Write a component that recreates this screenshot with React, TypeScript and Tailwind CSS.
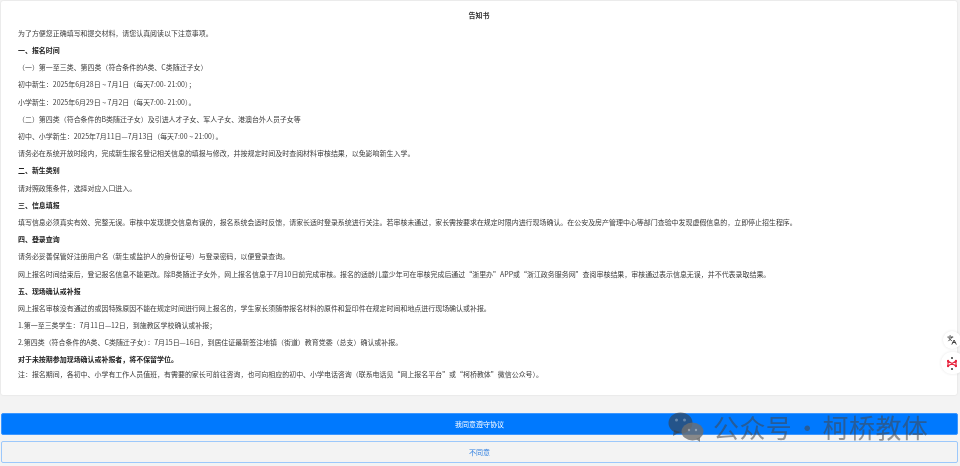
import { Languages } from 'lucide-react';

const rows: { text: string; bold?: boolean }[] = [
  { text: '为了方便您正确填写和提交材料，请您认真阅读以下注意事项。' },
  { text: '一、报名时间', bold: true },
  { text: '（一）第一至三类、第四类（符合条件的A类、C类随迁子女）' },
  { text: '初中新生：2025年6月28日 ~ 7月1日（每天7:00- 21:00）；' },
  { text: '小学新生：2025年6月29日 ~ 7月2日（每天7:00- 21:00）。' },
  { text: '（二）第四类（符合条件的B类随迁子女）及引进人才子女、军人子女、港澳台外人员子女等' },
  { text: '初中、小学新生：2025年7月11日—7月13日（每天7:00 ~ 21:00）。' },
  { text: '请务必在系统开放时段内，完成新生报名登记相关信息的填报与修改，并按规定时间及时查阅材料审核结果，以免影响新生入学。' },
  { text: '二、新生类别', bold: true },
  { text: '请对照政策条件，选择对应入口进入。' },
  { text: '三、信息填报', bold: true },
  { text: '填写信息必须真实有效、完整无误。审核中发现提交信息有误的，报名系统会适时反馈，请家长适时登录系统进行关注。若审核未通过，家长需按要求在规定时限内进行现场确认。在公安及房产管理中心等部门查验中发现虚假信息的，立即停止招生程序。' },
  { text: '四、登录查询', bold: true },
  { text: '请务必妥善保管好注册用户名（新生或监护人的身份证号）与登录密码，以便登录查询。' },
  { text: '网上报名时间结束后，登记报名信息不能更改。除B类随迁子女外，网上报名信息于7月10日前完成审核。报名的适龄儿童少年可在审核完成后通过“浙里办”APP或“浙江政务服务网”查阅审核结果，审核通过表示信息无误，并不代表录取结果。' },
  { text: '五、现场确认或补报', bold: true },
  { text: '网上报名审核没有通过的或因特殊原因不能在规定时间进行网上报名的，学生家长须随带报名材料的原件和复印件在规定时间和地点进行现场确认或补报。' },
  { text: '1.第一至三类学生：7月11日—12日，到施教区学校确认或补报；' },
  { text: '2.第四类（符合条件的A类、C类随迁子女）：7月15日—16日，到居住证最新签注地镇（街道）教育党委（总支）确认或补报。' },
  { text: '对于未按期参加现场确认或补报者，将不保留学位。', bold: true },
];

const App = () => {
  return (
    <div className="relative flex h-[466px] w-[960px] flex-col overflow-hidden bg-[#f3f3f3] px-px pt-px font-['Noto_Sans_CJK_SC','Liberation_Sans',sans-serif] blur-[0.45px]">
      {/* 告知书正文 */}
      <div className="h-[394px] w-[956px] rounded-[2px] bg-white px-[17px] pt-[10px] text-[6.96px] text-[#3a3a3a] shadow-[0_0_2px_rgba(0,0,0,0.12)]">
        <h1 className="mb-[5.5px] text-center text-[7px] leading-[8px] font-bold text-[#333]">告知书</h1>
        <div className="flex flex-col">
          {rows.map((row) => (
            <p
              key={row.text}
              className={`flex h-[17.2px] items-center whitespace-pre ${row.bold ? 'font-bold text-[#222]' : ''}`}
            >
              {row.text}
            </p>
          ))}
          <p className="mt-[-3px] flex h-[17px] items-center whitespace-nowrap">
            注：报名期间，各初中、小学有工作人员值班，有需要的家长可前往咨询，也可向相应的初中、小学电话咨询（联系电话见“网上报名平台”或“柯桥教体”微信公众号）。
          </p>
        </div>
      </div>

      {/* 底部按钮 */}
      <div className="mt-[18px] flex w-[957px] flex-col gap-[6px]">
        <button className="h-[22px] rounded-[2px] border border-[#3b96ff] bg-[#0079fe] text-[7px] text-white">
          我同意遵守协议
        </button>
        <button className="h-[22px] rounded-[2px] border border-[#9cc8fb] bg-[#f3f3f3] text-[7px] text-[#2f7fe0]">
          不同意
        </button>
      </div>

      {/* 右侧悬浮按钮 */}
      <div className="absolute top-[331px] left-[943px] flex h-[18px] w-[18px] items-center justify-center rounded-full bg-white shadow-[0_0_3px_rgba(0,0,0,0.1)]">
        <Languages size={10} strokeWidth={2.4} className="text-[#444]" />
      </div>
      <div className="absolute top-[352px] left-[941px] flex h-[22px] w-[24px] items-center rounded-full bg-white pl-[6px] shadow-[0_0_3px_rgba(0,0,0,0.1)]">
        <svg width="10" height="13" viewBox="0 0 10 13">
          <path d="M1 4 L9 9 M9 4 L1 9 M1 4 V9 M9 4 V9" stroke="#e8253f" strokeWidth="1.2" fill="none" />
          <circle cx="5" cy="1" r="1" fill="#333" />
          <circle cx="5" cy="12" r="1" fill="#333" />
          <circle cx="1" cy="4" r="1.2" fill="#e8253f" />
          <circle cx="9" cy="4" r="1.2" fill="#e8253f" />
          <circle cx="1" cy="9" r="1.2" fill="#e8253f" />
          <circle cx="9" cy="9" r="1.2" fill="#e8253f" />
        </svg>
      </div>

      {/* 公众号水印 */}
      <div className="absolute top-[412px] left-[668px] flex items-center text-[26px] leading-[28px] tracking-[0.4px] text-[rgba(70,70,70,0.55)]">
        <svg width="36" height="30" viewBox="0 0 36 30">
          <ellipse cx="12.5" cy="11" rx="12" ry="10.5" fill="rgba(60,60,60,0.6)" />
          <path d="M6 18 L5 24 L12 20 Z" fill="rgba(60,60,60,0.6)" />
          <ellipse cx="24.5" cy="19.5" rx="11" ry="9" fill="rgba(110,110,110,0.8)" />
          <path d="M28 27 L32 30 L32 25 Z" fill="rgba(110,110,110,0.8)" />
          <circle cx="8.5" cy="8" r="1.5" fill="rgba(255,255,255,0.3)" />
          <circle cx="16.5" cy="8" r="1.5" fill="rgba(255,255,255,0.3)" />
          <circle cx="21" cy="18" r="1.2" fill="rgba(255,255,255,0.35)" />
          <circle cx="28" cy="18" r="1.2" fill="rgba(255,255,255,0.35)" />
        </svg>
        <div className="ml-[9px] flex items-center gap-[2px]">
          <span>公众号</span>
          <span>·</span>
          <span>柯桥教体</span>
        </div>
      </div>
    </div>
  );
};

export default App;
